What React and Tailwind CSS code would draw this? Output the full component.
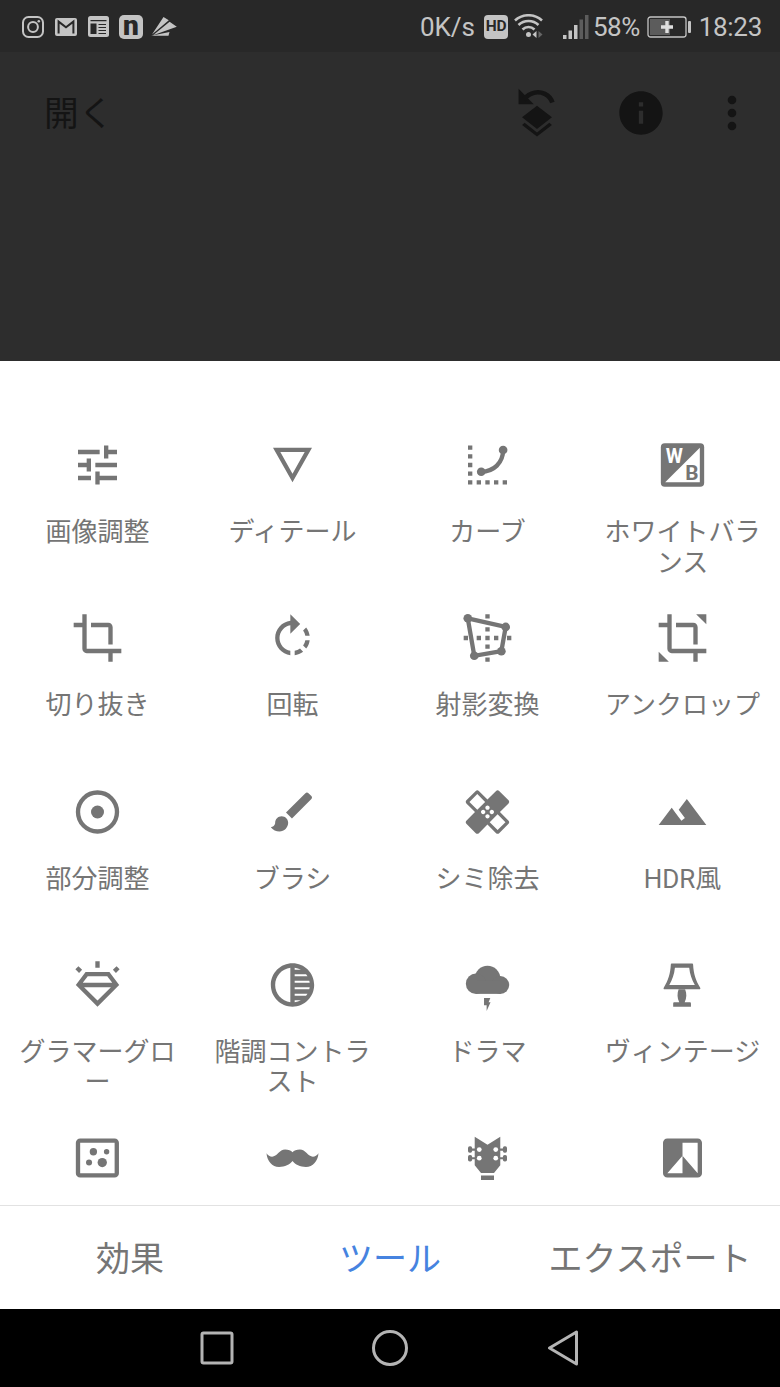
import React from 'react';

const CROP =
  'M17 15h2V7c0-1.1-.9-2-2-2H9v2h8v8zM7 17V1H5v4H1v2h4v10c0 1.1.9 2 2 2h10v4h2v-4h4v-2H7z';

const TOOLS = [
  {
    label: '画像調整',
    icon: (
      <path d="M3 17v2h6v-2H3zM3 5v2h10V5H3zm10 16v-2h8v-2h-8v-2h-2v6h2zM7 9v2H3v2h4v2h2V9H7zm14 4v-2H11v2h10zm-6-4h2V7h4V5h-4V3h-2v6z" />
    ),
  },
  { label: 'ディテール', icon: <path d="M3 4l9 16 9-16H3zm3.38 2h11.25L12 16 6.38 6z" /> },
  {
    label: 'カーブ',
    icon: (
      <>
        <path d="M3 3h2v2H3zM3 7h2v2H3zM3 11h2v2H3zM3 15h2v2H3zM3 19h2v2H3zM7 19h2v2H7zM11 19h2v2h-2zM15 19h2v2h-2zM19 19h2v2h-2z" />
        <circle cx="9.1" cy="15.1" r="2" />
        <circle cx="19.2" cy="5.1" r="2" />
        <path d="M9.1 15.1c5.8 0 10.1-4.2 10.1-10" fill="none" stroke="currentColor" strokeWidth="2" />
      </>
    ),
  },
  {
    label: 'ホワイトバランス',
    icon: (
      <>
        <rect x="2" y="2" width="20" height="20" rx="1.8" />
        <path d="M20 4v16H4z" fill="#fff" />
        <text x="8.2" y="11" fontSize="9.2" fontWeight="700" textAnchor="middle" textLength="7.9" lengthAdjust="spacingAndGlyphs" fill="#fff">W</text>
        <text x="16.3" y="19" fontSize="9.6" fontWeight="700" textAnchor="middle">B</text>
      </>
    ),
  },
  { label: '切り抜き', icon: <path d={CROP} /> },
  {
    label: '回転',
    icon: (
      <path d="M15.55 5.55L11 1v3.07C7.06 4.56 4 7.92 4 12s3.05 7.44 7 7.93v-2.02c-2.84-.48-5-2.94-5-5.91s2.16-5.43 5-5.91V10l4.55-4.45zM19.93 11c-.17-1.39-.72-2.73-1.62-3.89l-1.42 1.42c.54.75.88 1.6 1.02 2.47h2.02zM13 17.9v2.02c1.39-.17 2.74-.71 3.9-1.61l-1.44-1.44c-.75.54-1.59.89-2.46 1.03zm3.89-2.42l1.42 1.41c.9-1.16 1.45-2.5 1.62-3.89h-2.02c-.14.87-.48 1.72-1.02 2.48z" />
    ),
  },
  {
    label: '射影変換',
    icon: (
      <>
        <path d="M11 1h2v2h-2zM11 7h2v2h-2zM11 11h2v2h-2zM11 15h2v2h-2zM11 21h2v2h-2zM1 11h2v2H1zM7 11h2v2H7zM15 11h2v2h-2zM21 11h2v2h-2z" />
        <path d="M2.9 2.9l17.5 4-2 11.2-12.5 2.1z" fill="none" stroke="currentColor" strokeWidth="2" />
        <circle cx="2.9" cy="2.9" r="2" />
        <circle cx="20.4" cy="6.9" r="2" />
        <circle cx="18.4" cy="18.1" r="2" />
        <circle cx="5.9" cy="20.2" r="2" />
      </>
    ),
  },
  { label: 'アンクロップ', icon: <path d={`${CROP}M18.3 1H23v4.7zM1 18.3V23h4.7z`} /> },
  {
    label: '部分調整',
    icon: (
      <>
        <circle cx="12" cy="12" r="9" fill="none" stroke="currentColor" strokeWidth="2" />
        <circle cx="12" cy="12" r="3" />
      </>
    ),
  },
  {
    label: 'ブラシ',
    icon: (
      <path d="M7 14c-1.66 0-3 1.34-3 3 0 1.31-1.16 2-2 2 .92 1.22 2.49 2 4 2 2.21 0 4-1.79 4-4 0-1.66-1.34-3-3-3zm13.71-9.37l-1.34-1.34c-.39-.39-1.02-.39-1.41 0L9 12.25 11.75 15l8.96-8.96c.39-.39.39-1.02 0-1.41z" />
    ),
  },
  {
    label: 'シミ除去',
    icon: (
      <path d="M17.73 12.02l3.98-3.98c.39-.39.39-1.02 0-1.41l-4.34-4.34c-.39-.39-1.02-.39-1.41 0l-3.98 3.98L8 2.29C7.8 2.1 7.55 2 7.29 2c-.25 0-.51.1-.7.29L2.25 6.63c-.39.39-.39 1.02 0 1.41l3.98 3.98L2.25 16c-.39.39-.39 1.02 0 1.41l4.34 4.34c.39.39 1.02.39 1.41 0l3.98-3.98 3.98 3.98c.2.2.45.29.71.29.26 0 .51-.1.71-.29l4.34-4.34c.39-.39.39-1.02 0-1.41l-3.99-3.98zM12 9c.55 0 1 .45 1 1s-.45 1-1 1-1-.45-1-1 .45-1 1-1zm-4.71 1.96L3.66 7.34l3.63-3.63 3.62 3.62-3.62 3.63zM10 13c-.55 0-1-.45-1-1s.45-1 1-1 1 .45 1 1-.45 1-1 1zm2 2c-.55 0-1-.45-1-1s.45-1 1-1 1 .45 1 1-.45 1-1 1zm2-4c.55 0 1 .45 1 1s-.45 1-1 1-1-.45-1-1 .45-1 1-1zm2.66 9.34l-3.63-3.62 3.63-3.63 3.62 3.62-3.62 3.63z" />
    ),
  },
  {
    label: 'HDR風',
    icon: <path d="M14 6l-3.75 5 2.85 3.8-1.6 1.2C9.81 13.75 7 10 7 10l-6 8h22L14 6z" />,
  },
  {
    label: 'グラマーグロー',
    icon: (
      <>
        <path
          fillRule="evenodd"
          d="M6.5 6h11L22 12 12 22 2 12zM7.5 8l-2.3 3h13.6l-2.3-3zM5.8 13l6.2 6.2 6.2-6.2z"
        />
        <path d="M12 1v3M2.5 4l1.7 1.7M21.5 4l-1.7 1.7" fill="none" stroke="currentColor" strokeWidth="2" />
      </>
    ),
  },
  {
    label: '階調コントラスト',
    icon: (
      <path d="M12 2C6.48 2 2 6.48 2 12s4.48 10 10 10 10-4.48 10-10S17.52 2 12 2zm-1 17.93c-3.94-.49-7-3.85-7-7.93s3.05-7.44 7-7.93v15.86zm2-15.86c1.03.13 2 .45 2.87.93H13v-.93zM13 7h5.24c.25.31.48.65.68 1H13V7zm0 3h6.74c.08.33.15.66.19 1H13v-1zm0 9.93V19h2.87c-.87.48-1.84.8-2.87.93zM18.24 17H13v-1h5.92c-.2.35-.43.69-.68 1zm1.5-3H13v-1h6.93c-.04.34-.11.67-.19 1z" />
    ),
  },
  {
    label: 'ドラマ',
    icon: (
      <>
        <circle cx="12" cy="9" r="5.9" />
        <circle cx="6.7" cy="11.4" r="4.7" />
        <circle cx="17.9" cy="12" r="4.1" />
        <path d="M6.7 10h11.2v6.1H6.7z" />
        <path d="M10.4 18h2.9l-.8 2h.9L11.6 24v-2.7h-1.2z" />
      </>
    ),
  },
  {
    label: 'ヴィンテージ',
    icon: (
      <>
        <path
          fillRule="evenodd"
          d="M7.2 2.1h9.1c.4 0 .6.2.6.6.2 4.1 1.2 7.3 3.2 10.4.3.5.1.9-.4.9H3.8c-.5 0-.7-.4-.4-.9 2-3.1 3-6.3 3.2-10.4 0-.4.2-.6.6-.6zM8.5 4C8.2 7 7.3 9.5 5.9 12h11.8c-1.4-2.5-2.3-5-2.6-8z"
        />
        <path d="M10.2 14h3c.8 2 .8 4-.2 6h2.3c.4 0 .6.2.6.6V22H7.7v-1.4c0-.4.2-.6.6-.6h2.2c-1-2-1-4-.3-6z" />
      </>
    ),
  },
  {
    icon: (
      <>
        <rect x="3" y="4" width="17.9" height="16" rx="1" fill="none" stroke="currentColor" strokeWidth="2" />
        <circle cx="10.1" cy="9.1" r="1.7" />
        <circle cx="16.2" cy="9.1" r="1.25" />
        <circle cx="8.1" cy="14.1" r="1.4" />
        <circle cx="14.2" cy="14.1" r="2.15" />
      </>
    ),
  },
  {
    icon: (
      <path d="M0 9.8C.3 13.5 2.6 16.1 5.8 16.1c2.7 0 4.9-1 6.2-2.7 1.3 1.7 3.5 2.7 6.2 2.7 3.2 0 5.5-2.6 5.8-6.3-.7 1-1.6 1.6-2.6 1.6C19.2 11.4 18 8.1 15.4 8.1c-1.5 0-2.7.4-3.4 1.2-.7-.8-1.9-1.2-3.4-1.2C6 8.1 4.8 11.4 2.6 11.4 1.6 11.4.7 10.8 0 9.8z" />
    ),
  },
  {
    icon: (
      <>
        <path d="M6.1 2.2L12 5.9l5.9-3.7v13.1L15 18.9H9l-2.9-3.6zM9 20.1h6v2H9z" />
        <path d="M4 8.1h2.5M4 12.1h2.5M17.5 8.1H20M17.5 12.1H20" stroke="currentColor" />
        <rect x="3" y="6.6" width="1.9" height="3" rx=".8" />
        <rect x="3" y="10.6" width="1.9" height="3" rx=".8" />
        <rect x="19.1" y="6.6" width="1.9" height="3" rx=".8" />
        <rect x="19.1" y="10.6" width="1.9" height="3" rx=".8" />
        <g fill="#fff">
          <circle cx="8.2" cy="8.1" r="1.1" />
          <circle cx="15.8" cy="8.1" r="1.1" />
          <circle cx="8.2" cy="12.1" r="1.1" />
          <circle cx="15.8" cy="12.1" r="1.1" />
        </g>
      </>
    ),
  },
  {
    icon: (
      <path d="M19 3H5c-1.1 0-2 .9-2 2v14c0 1.1.9 2 2 2h14c1.1 0 2-.9 2-2V5c0-1.1-.9-2-2-2zm0 16l-7-8v8H5l7-8V5h7v14z" />
    ),
  },
];

function Icon({ viewBox = '0 0 24 24', children }) {
  return (
    <svg viewBox={viewBox} className="size-[52px] shrink-0 overflow-visible" fill="currentColor">
      {children}
    </svg>
  );
}

function StatusBar() {
  return (
    <div className="flex h-[52px] shrink-0 items-center justify-between bg-[#282828] pl-[22px] pr-[18px] pt-[1px] text-[26px] leading-none text-[#c4c4c4]">
      <div className="flex items-center">
        <svg width="22" height="22" viewBox="0 0 22 22" fill="none" stroke="currentColor" strokeWidth="2">
          <rect x="1" y="1" width="20" height="20" rx="5.5" />
          <circle cx="11" cy="11" r="4.9" />
          <circle cx="16.8" cy="5.2" r="1.3" fill="currentColor" stroke="none" />
        </svg>
        <svg width="22" height="18" viewBox="0 0 22 18" className="ml-[11px]">
          <rect width="22" height="18" rx="2" fill="currentColor" />
          <path d="M3.6 15.5V3.6L11 9.3l7.4-5.7v11.9" fill="none" stroke="#282828" strokeWidth="2" />
        </svg>
        <svg width="21" height="21" viewBox="0 0 21 21" className="ml-[11px]">
          <rect width="21" height="21" rx="2.5" fill="currentColor" />
          <path d="M2.5 4.7h16M10.5 8.5H18M10.5 11.5H18M10.5 14.5H18M10.5 17.5H18" fill="none" stroke="#282828" strokeWidth="1.2" />
          <path d="M2.5 7.5h6v10.5h-6z" fill="#282828" />
        </svg>
        <div className="ml-[10px] flex h-6 w-6 items-center justify-center rounded-[5px] bg-[#c4c4c4]">
          <span className="-mt-[2px] text-[28px] font-black leading-[32px] text-[#282828]">n</span>
        </div>
        <svg width="26" height="20" viewBox="0 0 26 20" className="ml-[8px]" fill="currentColor">
          <path d="M12.5 0l5.3 3.3L1 17.5zM18.6 4.8l7.2 5L2 18.2zM18.5 15l-1 3.8H0z" />
        </svg>
      </div>
      <div className="flex items-center">
        <span>0K/s</span>
        <span className="ml-[9px] flex h-6 w-6 items-center justify-center rounded-[4px] bg-[#c4c4c4] text-[15.5px] font-bold tracking-[-0.3px] text-[#282828]">
          HD
        </span>
        <svg width="30" height="25" viewBox="0 0 30 25" className="ml-[6px]" fill="none" stroke="currentColor" strokeWidth="2.6">
          <path d="M1 6.5c7.5-7 19.5-7 27 0M4.5 11c5.5-5.3 14.5-5.3 20 0M8.5 15.5c3.5-3.3 8.5-3.3 12 0" />
          <circle cx="14.5" cy="20.5" r="2.5" fill="currentColor" stroke="none" />
          <path d="M18.5 20.5l4-3.5v7z" fill="currentColor" stroke="none" />
          <path d="M28.5 20.5l-4-3.5v7z" fill="#666" stroke="none" />
        </svg>
        <svg width="26" height="24" viewBox="0 0 26 24" className="ml-[19px]">
          <path d="M0 20h3.5v4H0zM5.500 15.5H9V24H5.5zM11 10h3.5v14H11z" fill="currentColor" />
          <path d="M16.5 4.5H20V24h-3.5zM22 0h3.5v24H22z" fill="#5c5c5c" />
        </svg>
        <span className="ml-[4px] tracking-[-0.5px]">58%</span>
        <svg width="45" height="22" viewBox="0 0 45 22" className="ml-[7px]">
          <rect x="1" y="1" width="38" height="20" rx="2.5" fill="none" stroke="currentColor" strokeWidth="1.3" />
          <rect x="3" y="3" width="20" height="16" fill="#5c5c5c" />
          <path d="M18.3 5h3.4v4.3H26v3.4h-4.3V17h-3.4v-4.3H14V9.3h4.3z" fill="#e0e0e0" />
          <rect x="41" y="5" width="3" height="12" rx="1" fill="currentColor" />
        </svg>
        <span className="ml-[7px] tracking-[-0.3px]">18:23</span>
      </div>
    </div>
  );
}

function AppBar() {
  return (
    <div className="flex h-[122px] items-center pl-[44px] pr-[22px] text-[#141414]">
      <span className="flex-1 pt-[2px] text-[34.67px] leading-none">開く</span>
      <Icon>
        <path d="M3.5.8V8h7z" />
        <path d="M5.8 5.8C9 2.2 12.8 1.9 15.6 3.2c1.7.8 2.9 2.2 3.5 4" fill="none" stroke="currentColor" strokeWidth="2.2" />
        <path d="M12 8.7l6.9 5.3-6.9 5.4L5.1 14zM6.3 16.5L12 21l5.7-4.5 1.2 1L12 22.9l-6.9-5.4z" />
      </Icon>
      <div className="ml-[52px] flex">
        <Icon>
          <path d="M12 2C6.48 2 2 6.48 2 12s4.48 10 10 10 10-4.48 10-10S17.52 2 12 2zm1 15h-2v-6h2v6zm0-8h-2V7h2v2z" />
        </Icon>
      </div>
      <div className="ml-[39px] flex">
        <Icon>
          <circle cx="12" cy="6" r="2" />
          <circle cx="12" cy="12" r="2" />
          <circle cx="12" cy="18" r="2" />
        </Icon>
      </div>
    </div>
  );
}

export default function App() {
  return (
    <div
      lang="ja"
      className="flex h-[1387px] w-[780px] flex-col overflow-hidden bg-[#2d2d2d] font-[Roboto,'Noto_Sans_CJK_JP',sans-serif]"
    >
      <StatusBar />
      <div className="h-[309px] shrink-0">
        <AppBar />
      </div>

      {/* Hoja de herramientas */}
      <div className="min-h-0 flex-1 overflow-hidden bg-white pt-[78px] text-[#757575]">
        <div className="grid auto-rows-[173.33px] grid-cols-4">
          {TOOLS.map((tool, i) => (
            <div key={i} className="flex flex-col items-center">
              {/* medio píxel a la izquierda: las columnas miden 195px */}
              <Icon viewBox="0.23 0 24 24">{tool.icon}</Icon>
              <span className="mt-[26px] w-[160px] text-center text-[26px] leading-[30.5px] [line-break:anywhere]">
                {tool.label}
              </span>
            </div>
          ))}
        </div>
      </div>

      <div className="grid h-[104px] shrink-0 grid-cols-3 items-center border-t border-[#e2e2e2] bg-white pt-[3px] text-center text-[34px] leading-none text-[#757575]">
        <span>効果</span>
        <span className="text-[#4683e0]">ツール</span>
        <span>エクスポート</span>
      </div>

      <div className="flex h-[78px] shrink-0 items-center justify-center gap-[137px] bg-black text-[#b4b4b4]">
        <svg width="36" height="36" viewBox="0 0 36 36" fill="none" stroke="currentColor" strokeWidth="3">
          <rect x="3" y="3" width="30" height="30" rx="1.5" />
        </svg>
        <svg width="36" height="36" viewBox="0 0 36 36" fill="none" stroke="currentColor" strokeWidth="3" className="overflow-visible">
          <circle cx="18" cy="18" r="16.5" />
        </svg>
        <svg width="36" height="36" viewBox="0 0 36 36" fill="none" stroke="currentColor" strokeWidth="3" strokeLinejoin="round">
          <path d="M31.5 2v32l-27-16z" />
        </svg>
      </div>
    </div>
  );
}
